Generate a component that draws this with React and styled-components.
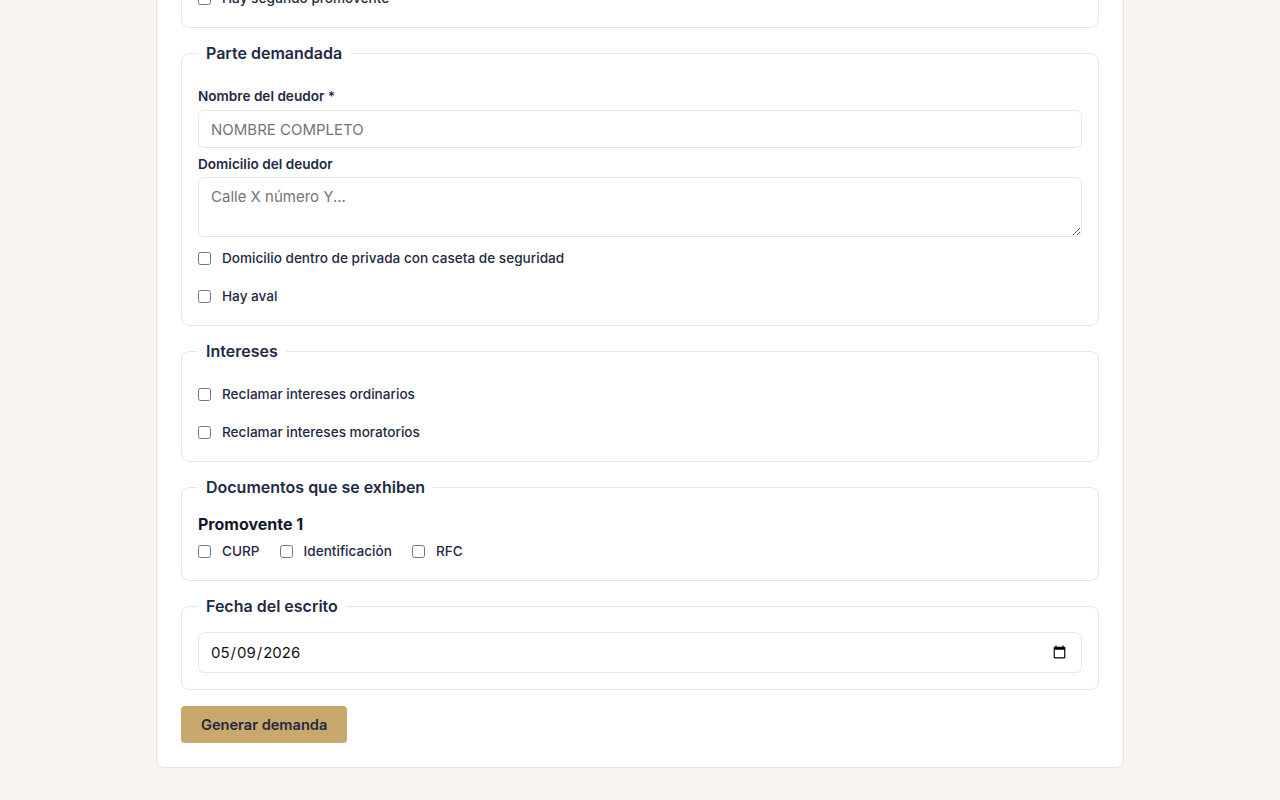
import React from "react";
import styled, { createGlobalStyle } from "styled-components";

const GlobalStyle = createGlobalStyle`
  html, body {
    margin: 0;
    padding: 0;
    background: #f8f5f0;
    font-family: Inter, "Noto Sans", Arial, sans-serif;
    color: #1f2a44;
  }
  * { box-sizing: border-box; }
`;

const Page = styled.main`
  padding-bottom: 32px;
`;

const Card = styled.div`
  width: 968px;
  margin: ${(p) => p.$offset}px auto 0;
  background: #ffffff;
  border: 1px solid #e6e4df;
  border-radius: 8px;
  padding: 24px;
`;

const Form = styled.form`
  display: flex;
  flex-direction: column;
  align-items: flex-start;
  gap: 16px;
`;

const Fieldset = styled.fieldset`
  align-self: stretch;
  margin: 0;
  min-width: 0;
  border: 1px solid #e5e7eb;
  border-radius: 8px;
  padding: 17px 16px 16px;
  display: flex;
  flex-direction: column;
`;

const Legend = styled.legend`
  padding: 0 8px;
  font-size: 16px;
  line-height: 18px;
  font-weight: 600;
  color: #1f2a44;
`;

const Field = styled.div`
  display: flex;
  flex-direction: column;
  margin-top: ${(p) => p.$mt ?? 0}px;
`;

const Label = styled.label`
  display: block;
  font-size: 13.6px;
  line-height: 20px;
  font-weight: 600;
  color: #1f2a44;
  margin-bottom: ${(p) => p.$mb ?? 4}px;
`;

const TextInput = styled.input`
  width: 100%;
  height: 38px;
  padding: 0 12px;
  border: 1px solid #e5e7eb;
  border-radius: 6px;
  font-family: Inter, Arial, sans-serif;
  font-size: 15px;
  color: #111827;
  background: #fff;
  outline: none;
  &::placeholder { color: #757575; }
`;

const TextArea = styled.textarea`
  width: 100%;
  height: 60px;
  padding: 9px 12px;
  border: 1px solid #e5e7eb;
  border-radius: 6px;
  font-family: Inter, Arial, sans-serif;
  font-size: 15px;
  line-height: 20px;
  color: #111827;
  resize: vertical;
  outline: none;
  &::placeholder { color: #757575; }
`;

const DateInput = styled.input`
  width: 100%;
  height: 41px;
  padding: 0 12px 0 11px;
  border: 1px solid #e5e7eb;
  border-radius: 6px;
  font-family: Inter, Arial, sans-serif;
  font-size: 15px;
  color: #111111;
  background: #fff;
  outline: none;
`;

const CheckRow = styled.label`
  display: flex;
  align-items: center;
  gap: 11px;
  height: 20px;
  margin-top: ${(p) => p.$mt ?? 0}px;
  margin-bottom: ${(p) => p.$mb ?? 0}px;
  font-size: 13.6px;
  font-weight: 500;
  color: #1f2a44;
`;

const CheckBox = styled.input.attrs({ type: "checkbox" })`
  width: 13px;
  height: 13px;
  margin: 0;
  flex: none;
`;

const InlineChecks = styled.div`
  display: flex;
  align-items: center;
  gap: 20px;
  margin-top: 7px;
  margin-bottom: 3px;
`;

const SubHeading = styled.h4`
  margin: 1px 0 0;
  font-size: 16px;
  line-height: 20px;
  font-weight: 700;
  color: #111827;
`;

const SubmitButton = styled.button`
  height: 37px;
  padding: 0 20px;
  border: none;
  border-radius: 4px;
  background: #c8a86b;
  color: #1f2a44;
  font-family: Inter, Arial, sans-serif;
  font-size: 14.6px;
  font-weight: 600;
  cursor: pointer;
`;

export default function App() {
  return (
    <>
      <GlobalStyle />
      <Page>
        <Card $offset={-241}>
          <Form onSubmit={(e) => e.preventDefault()}>
            <Fieldset>
              <Legend>Parte promovente</Legend>
              <Field $mt={7}>
                <Label>Nombre del promovente *</Label>
                <TextInput placeholder="NOMBRE COMPLETO" />
              </Field>
              <Field $mt={6}>
                <Label $mb={3}>Domicilio del promovente</Label>
                <TextArea placeholder="Calle X número Y..." />
              </Field>
              <CheckRow $mt={11} $mb={3}>
                <CheckBox />
                Hay segundo promovente
              </CheckRow>
            </Fieldset>

            <Fieldset>
              <Legend>Parte demandada</Legend>
              <Field $mt={7}>
                <Label>Nombre del deudor *</Label>
                <TextInput placeholder="NOMBRE COMPLETO" />
              </Field>
              <Field $mt={6}>
                <Label $mb={3}>Domicilio del deudor</Label>
                <TextArea placeholder="Calle X número Y..." />
              </Field>
              <CheckRow $mt={11}>
                <CheckBox />
                Domicilio dentro de privada con caseta de seguridad
              </CheckRow>
              <CheckRow $mt={18} $mb={3}>
                <CheckBox />
                Hay aval
              </CheckRow>
            </Fieldset>

            <Fieldset>
              <Legend>Intereses</Legend>
              <CheckRow $mt={7}>
                <CheckBox />
                Reclamar intereses ordinarios
              </CheckRow>
              <CheckRow $mt={18} $mb={3}>
                <CheckBox />
                Reclamar intereses moratorios
              </CheckRow>
            </Fieldset>

            <Fieldset>
              <Legend>Documentos que se exhiben</Legend>
              <SubHeading>Promovente 1</SubHeading>
              <InlineChecks>
                <CheckRow>
                  <CheckBox />
                  CURP
                </CheckRow>
                <CheckRow>
                  <CheckBox />
                  Identificación
                </CheckRow>
                <CheckRow>
                  <CheckBox />
                  RFC
                </CheckRow>
              </InlineChecks>
            </Fieldset>

            <Fieldset>
              <Legend>Fecha del escrito</Legend>
              <DateInput type="date" defaultValue="2026-05-09" />
            </Fieldset>

            <SubmitButton type="submit">Generar demanda</SubmitButton>
          </Form>
        </Card>
      </Page>
    </>
  );
}
